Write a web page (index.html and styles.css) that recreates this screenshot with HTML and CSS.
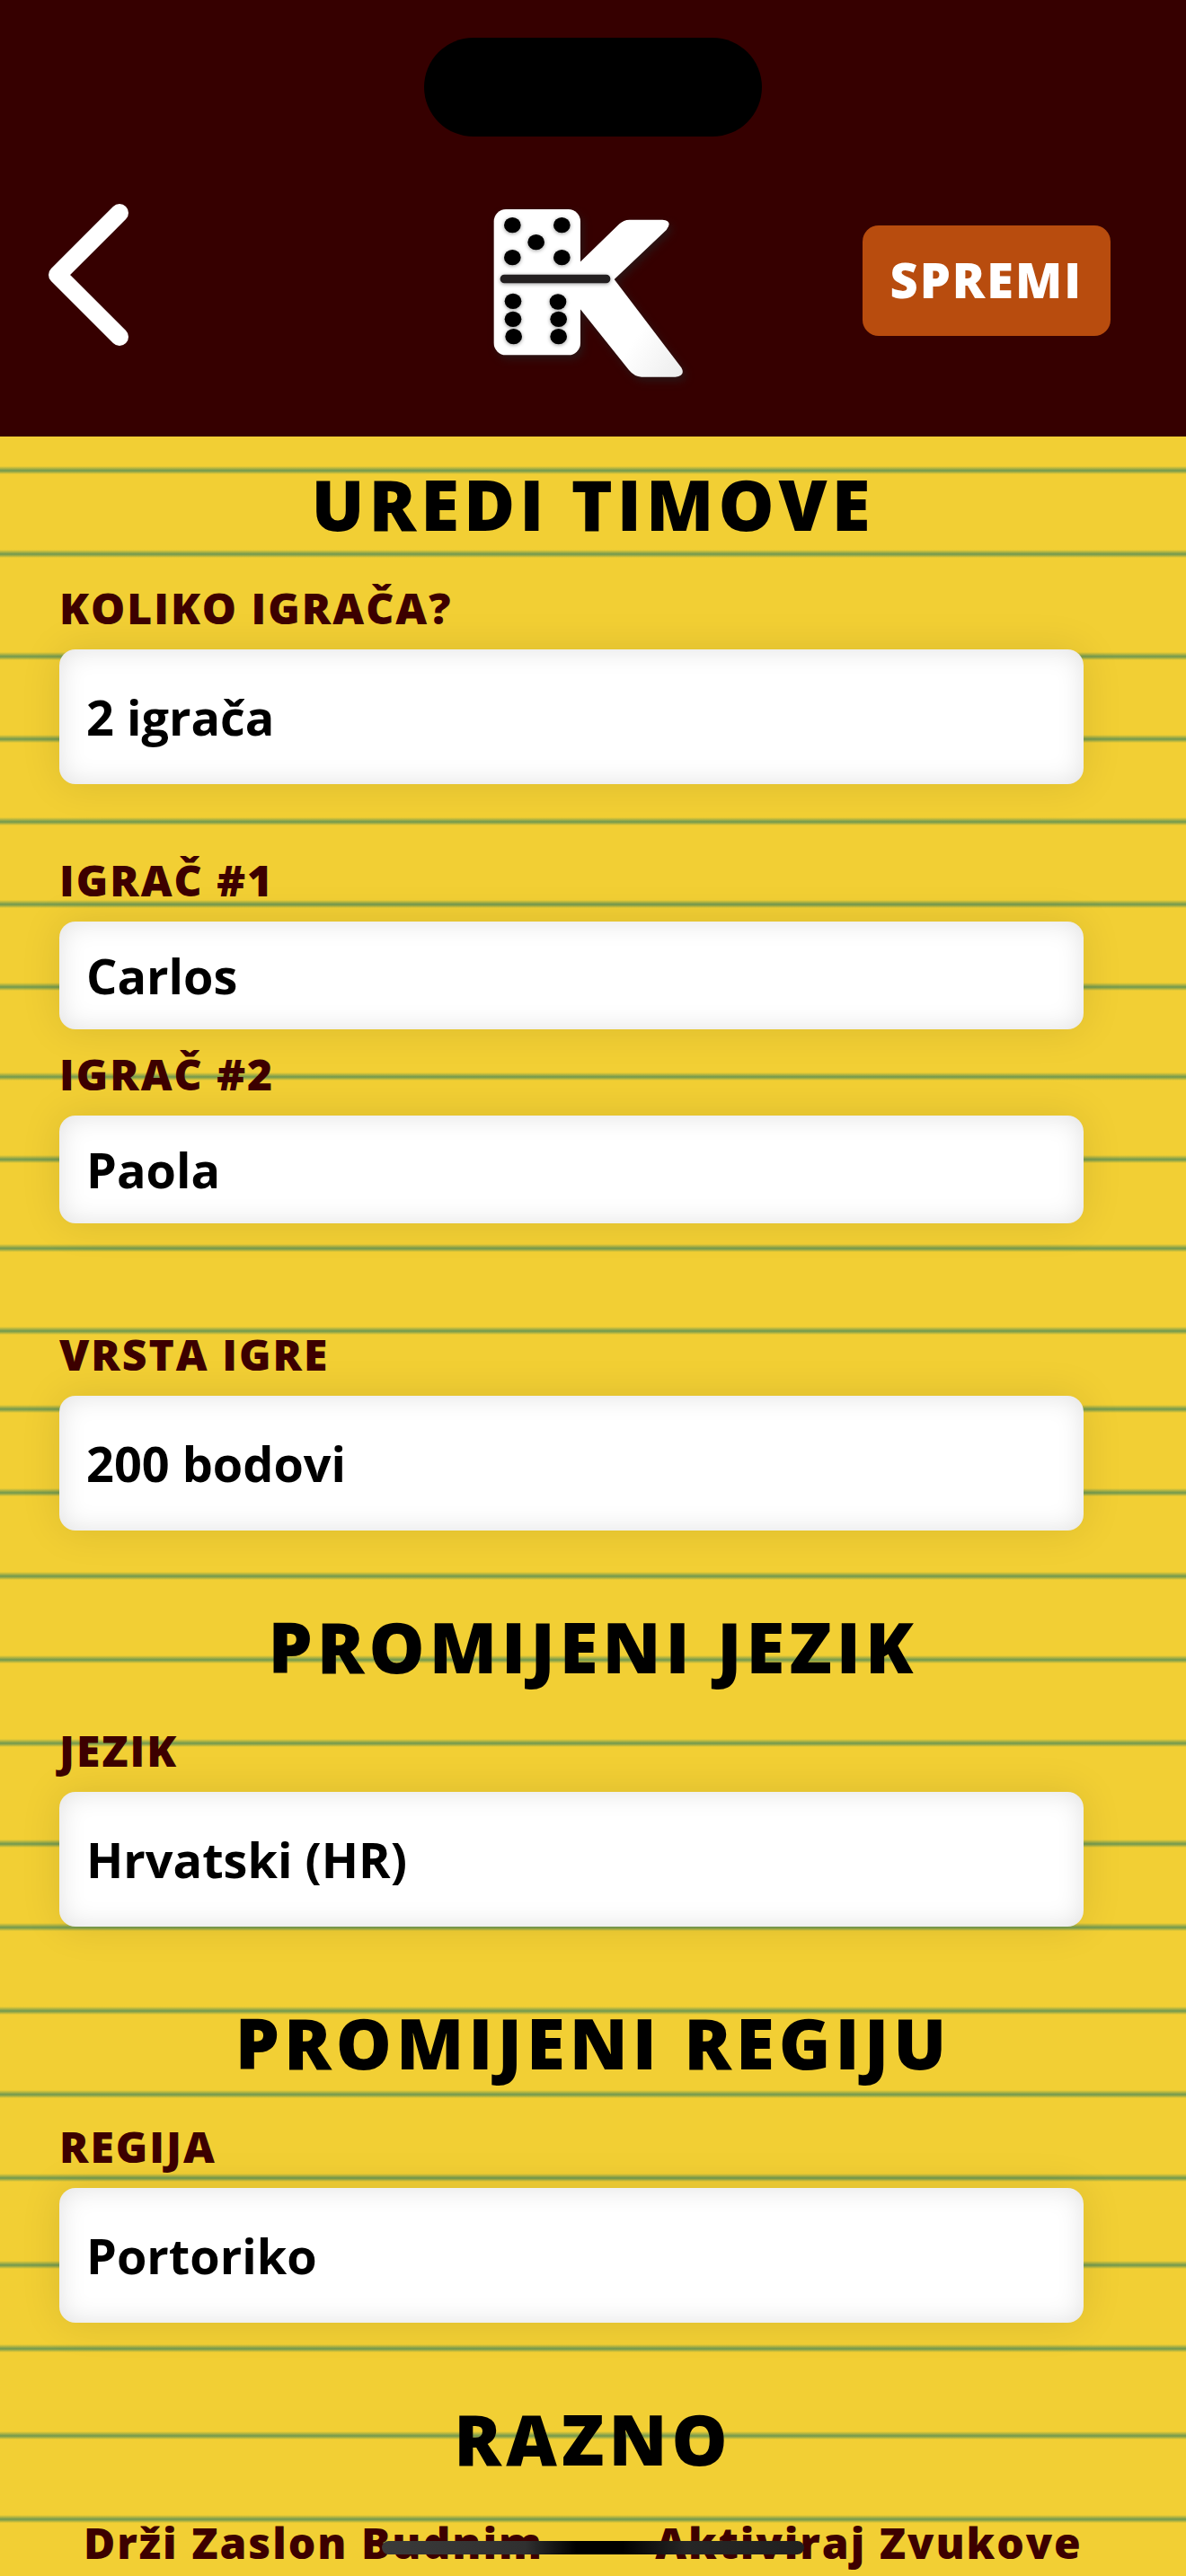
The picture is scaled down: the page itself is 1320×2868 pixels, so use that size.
FILE: index.html
```html
<!DOCTYPE html>
<html lang="hr">
<head>
  <meta charset="utf-8">
  <meta name="viewport" content="width=device-width, initial-scale=1">
  <title>Uredi timove</title>
  <link rel="stylesheet" href="styles.css">
</head>
<body>
  <div class="island"></div>

  <header class="topbar">
    <button class="back" type="button" aria-label="Natrag">
      <svg class="back-icon" viewBox="0 0 90 170" aria-hidden="true">
        <path d="M79 10 L10 79 L79 148"/>
      </svg>
    </button>
    <svg class="logo" viewBox="84 -30 672 672" role="img" aria-label="K">
      <defs>
        <linearGradient id="face" x1="0.300" y1="0.300" x2="1" y2="1">
          <stop offset="0.500" stop-color="#fff"/>
          <stop offset="1" stop-color="#ececec"/>
        </linearGradient>
      </defs>
      <g class="logo-shape">
        <path fill="url(#face)" d="M370 252 L508 118 Q522 104 542 104 L652 104 Q688 108 665 138 L491 303 L715 598 Q730 625 695 629 L582 629 Q558 628 540 606 L370 393 Z"/>
        <rect x="89" y="69" width="289" height="487" rx="40" fill="#fff"/>
      </g>
      <g class="logo-pips">
        <rect x="110" y="287" width="368" height="29" rx="14" fill="#231f20"/>
        <ellipse cx="151" cy="122" rx="28" ry="26"/>
        <ellipse cx="316" cy="122" rx="28" ry="26"/>
        <ellipse cx="230" cy="179" rx="28" ry="26"/>
        <ellipse cx="151" cy="230" rx="28" ry="26"/>
        <ellipse cx="316" cy="230" rx="28" ry="26"/>
        <ellipse cx="153" cy="376" rx="28" ry="26"/>
        <ellipse cx="303" cy="378" rx="28" ry="26"/>
        <ellipse cx="153" cy="436" rx="28" ry="26"/>
        <ellipse cx="305" cy="436" rx="28" ry="26"/>
        <ellipse cx="155" cy="494" rx="28" ry="26"/>
        <ellipse cx="305" cy="494" rx="28" ry="26"/>
      </g>
    </svg>
    <button class="save" type="submit" form="settings">SPREMI</button>
  </header>

  <main class="paper">
    <form id="settings">
      <section class="section">
        <h1 class="title">UREDI TIMOVE</h1>
        <div class="field">
          <label class="label" for="count">KOLIKO IGRAČA?</label>
          <select class="control control-select" id="count"><option>2 igrača</option></select>
        </div>
        <div class="players">
          <div class="field">
            <label class="label" for="player1">IGRAČ #1</label>
            <input class="control" id="player1" type="text" value="Carlos">
          </div>
          <div class="field">
            <label class="label" for="player2">IGRAČ #2</label>
            <input class="control" id="player2" type="text" value="Paola">
          </div>
        </div>
        <div class="field">
          <label class="label" for="game">VRSTA IGRE</label>
          <select class="control control-select" id="game"><option>200 bodovi</option></select>
        </div>
      </section>

      <section class="section">
        <h2 class="title">PROMIJENI JEZIK</h2>
        <div class="field">
          <label class="label" for="language">JEZIK</label>
          <select class="control control-select" id="language"><option>Hrvatski (HR)</option></select>
        </div>
      </section>

      <section class="section">
        <h2 class="title">PROMIJENI REGIJU</h2>
        <div class="field">
          <label class="label" for="region">REGIJA</label>
          <select class="control control-select" id="region"><option>Portoriko</option></select>
        </div>
      </section>

      <section class="section">
        <h2 class="title">RAZNO</h2>
        <div class="toggles">
          <span class="toggle-name">Drži Zaslon Budnim</span>
          <span class="toggle-name">Aktiviraj Zvukove</span>
        </div>
      </section>
    </form>
  </main>

  <div class="home-indicator"></div>
</body>
</html>
```
FILE: styles.css
```css
:root {
  --maroon: #360000;
  --paper: #f2cf34;
  --rule: #6f984f;
  --rules-92: repeating-linear-gradient(transparent 0, var(--rule) 5px, transparent 9px, transparent 92px);
  --rules-93: repeating-linear-gradient(transparent 0, var(--rule) 5px, transparent 9px, transparent 93px);
}

* {
  box-sizing: border-box;
}

body {
  display: flex;
  flex-direction: column;
  min-height: 100vh;
  margin: 0;
  background: var(--paper);
  color: #000;
  font-family: "Open Sans", "Noto Sans", sans-serif;
}

button,
input,
select {
  font-family: inherit;
}

/* Device chrome that floats over the page */
.island {
  position: fixed;
  top: 42px;
  left: 50%;
  width: 376px;
  height: 110px;
  margin-left: -188px;
  border-radius: 55px;
  background: #000;
}

.home-indicator {
  position: fixed;
  bottom: 24px;
  left: 50%;
  width: 470px;
  height: 15px;
  margin-left: -235px;
  border-radius: 8px;
  background: linear-gradient(90deg, #3a3a3a, #303030 34%, #000 46%, #000 57%, #262626 72%, #202020);
}

.topbar {
  display: grid;
  grid-template-columns: 1fr auto 1fr;
  align-items: center;
  padding: 200px 84px 62px 54px;
  background: var(--maroon);
}

.back {
  justify-self: start;
  padding: 0;
  border: 0;
  background: none;
}

.back-icon {
  display: block;
  width: 90px;
  height: 170px;
  fill: none;
  stroke: #fff;
  stroke-width: 20;
  stroke-linecap: round;
  stroke-linejoin: round;
}

.logo {
  width: 224px;
  height: 224px;
  margin-left: 30px;
  overflow: visible;
}

.logo-shape {
  filter: drop-shadow(10px 14px 12px #2a1414);
}

.logo-pips {
  filter: drop-shadow(0 3px 6px rgba(0, 0, 0, 0.4));
}

.save {
  justify-self: end;
  padding: 24px 31px 26px;
  border: 0;
  border-radius: 18px;
  background: #b84c0e;
  color: #fff;
  font-size: 54px;
  font-weight: 800;
  line-height: 73px;
  letter-spacing: 2px;
}

/* Ruled paper: each run of lines restarts with the block printed on it */
.paper {
  flex: 1;
  padding-top: 22px;
  background-color: var(--paper);
  background-image: var(--rules-93), var(--rules-92), var(--rules-92), var(--rules-92), var(--rules-93), var(--rules-93), var(--rules-93), var(--rules-93);
  background-position: 0 33px, 0 240px, 0 708px, 0 899px, 0 1078px, 0 1562px, 0 2031px, 0 2221px;
  background-size: 100% 103px, 100% 378px, 100% 102px, 100% 102px, 100% 382px, 100% 382px, 100% 103px, 100% 103px;
  background-repeat: no-repeat;
}

.section + .section {
  margin-top: 76px;
}

.title {
  margin: 0 0 31px;
  font-size: 78px;
  font-weight: 800;
  line-height: 106px;
  letter-spacing: 5px;
  text-align: center;
}

.field {
  display: flex;
  flex-direction: column;
  padding: 0 114px 0 66px;
}

.label {
  margin-bottom: 14px;
  color: #3d0000;
  font-size: 48px;
  font-weight: 800;
  line-height: 64px;
  letter-spacing: 2px;
}

.control {
  width: 100%;
  height: 120px;
  padding: 0 30px;
  border: 0;
  border-radius: 18px;
  outline: 0;
  appearance: none;
  background: #fff;
  box-shadow: 0 0 45px rgba(0, 0, 0, 0.1), inset 0 0 30px rgba(0, 0, 0, 0.12);
  color: #000;
  font-size: 54px;
  font-weight: 700;
}

.control-select {
  height: 150px;
}

.players {
  display: flex;
  flex-direction: column;
  gap: 18px;
  margin: 75px 0 114px;
}

.toggles {
  display: grid;
  grid-template-columns: 1fr 1fr;
  padding: 0 44px 0 40px;
  text-align: center;
}

.toggle-name {
  color: #3d0000;
  font-size: 48px;
  font-weight: 800;
  line-height: 64px;
  letter-spacing: 2px;
}
```
